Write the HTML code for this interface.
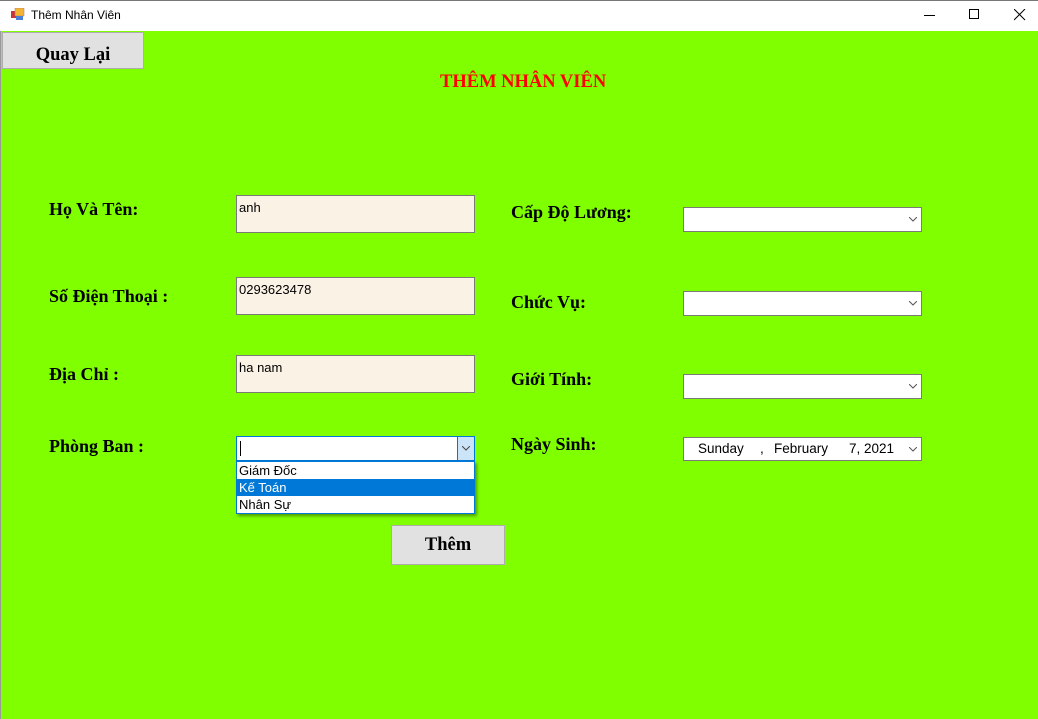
<!DOCTYPE html>
<html><head><meta charset="utf-8"><style>
*{margin:0;padding:0;box-sizing:border-box}
body{width:1038px;height:719px;overflow:hidden;background:#80ff00;position:relative;font-family:"Liberation Serif",serif}
.a{position:absolute}
.tb{left:0;top:0;width:1038px;height:31px;background:#fff;border-top:1px solid #777}
.lbl{font-weight:bold;font-size:18px;color:#000}
.tx{background:#fbf2e6;border:1px solid #7a7a7a;font-family:"Liberation Sans",sans-serif;font-size:13px;padding:4px 2px;color:#000}
.cb{background:#fff;border:1px solid #7a7a7a}
.btn{background:#e1e1e1;border:1px solid #adadad;font-weight:bold;font-size:18px;text-align:center}
.chev{position:absolute;right:5px;top:5px}
</style></head><body>
<div class="a" style="left:0;top:0;width:1px;height:719px;background:#999"></div>
<div class="a tb"></div>
<svg class="a" style="left:11px;top:8px" width="14" height="13"><rect x="0" y="3" width="5" height="7" fill="#c33"/><rect x="4" y="0" width="9" height="8" fill="#f2b431" stroke="#a77" stroke-width=".5"/><rect x="5" y="8" width="7" height="4" fill="#4a7fd8"/></svg>
<div class="a" style="left:31px;top:8px;font:12px 'Liberation Sans',sans-serif">Thêm Nhân Viên</div>
<div class="a" style="left:924px;top:15px;width:11px;height:1px;background:#000"></div>
<div class="a" style="left:969px;top:9px;width:10px;height:10px;border:1px solid #000"></div>
<svg class="a" style="left:1014px;top:9px" width="12" height="12"><path d="M0 0L11 11M11 0L0 11" stroke="#000" stroke-width="1"/></svg>
<div class="a btn" style="left:2px;top:32px;width:142px;height:37px;line-height:44px;font-size:18.5px">Quay Lại</div>
<div class="a" style="left:440px;top:72px;color:#f00;font-weight:bold;font-size:18.5px">THÊM NHÂN VIÊN</div>
<div class="a lbl" style="left:49px;top:199px">Họ Và Tên:</div>
<div class="a lbl" style="left:49px;top:286px">Số Điện Thoại :</div>
<div class="a lbl" style="left:49px;top:364px">Địa Chỉ :</div>
<div class="a lbl" style="left:49px;top:436px">Phòng Ban :</div>
<div class="a lbl" style="left:511px;top:202px">Cấp Độ Lương:</div>
<div class="a lbl" style="left:511px;top:292px">Chức Vụ:</div>
<div class="a lbl" style="left:511px;top:369px">Giới Tính:</div>
<div class="a lbl" style="left:511px;top:434px">Ngày Sinh:</div>
<div class="a tx" style="left:236px;top:195px;width:239px;height:38px">anh</div>
<div class="a tx" style="left:236px;top:277px;width:239px;height:38px">0293623478</div>
<div class="a tx" style="left:236px;top:355px;width:239px;height:38px">ha nam</div>
<div class="a cb" style="left:236px;top:436px;width:239px;height:25px;border-color:#0078d7"><div class="a" style="left:3px;top:4px;width:1px;height:15px;background:#000"></div><div class="a" style="right:0;top:0;width:17px;height:23px;background:#cce4f7;border-left:1px solid #0078d7"><svg class="chev" style="right:4px;top:9px" width="8" height="5"><path d="M0 0L4 4L8 0" fill="none" stroke="#444"/></svg></div></div>
<div class="a" style="left:236px;top:461px;width:239px;height:53px;background:#fff;border:1px solid #0078d7;box-shadow:2px 2px 3px rgba(0,0,0,.4);font:13px 'Liberation Sans',sans-serif">
<div style="height:17px;padding-left:2px;line-height:17px">Giám Đốc</div>
<div style="height:17px;padding-left:2px;line-height:17px;background:#0078d7;color:#fff">Kế Toán</div>
<div style="height:17px;padding-left:2px;line-height:17px">Nhân Sự</div></div>
<div class="a cb" style="left:683px;top:207px;width:239px;height:25px"><svg class="chev" style="right:4px;top:9px" width="8" height="5"><path d="M0 0L4 4L8 0" fill="none" stroke="#555"/></svg></div>
<div class="a cb" style="left:683px;top:291px;width:239px;height:25px"><svg class="chev" style="right:4px;top:9px" width="8" height="5"><path d="M0 0L4 4L8 0" fill="none" stroke="#555"/></svg></div>
<div class="a cb" style="left:683px;top:374px;width:239px;height:25px"><svg class="chev" style="right:4px;top:9px" width="8" height="5"><path d="M0 0L4 4L8 0" fill="none" stroke="#555"/></svg></div>
<div class="a cb" style="left:683px;top:437px;width:239px;height:24px;font:13.5px 'Liberation Sans',sans-serif"><span class="a" style="left:14px;top:3px">Sunday</span><span class="a" style="left:76px;top:3px">,</span><span class="a" style="left:90px;top:3px">February</span><span class="a" style="left:165px;top:3px">7, 2021</span><svg class="chev" style="right:4px;top:9px" width="8" height="5"><path d="M0 0L4 4L8 0" fill="none" stroke="#555"/></svg></div>
<div class="a btn" style="left:391px;top:525px;width:114px;height:40px;line-height:38px;font-size:18.5px">Thêm</div>
</body></html>
